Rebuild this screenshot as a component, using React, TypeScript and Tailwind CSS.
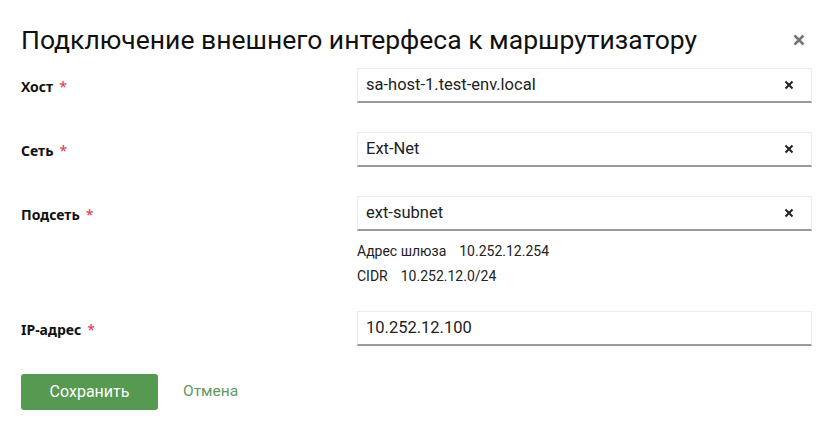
import React from 'react'

interface FieldProps {
  label: string
  value: string
  clearable?: boolean
  children?: React.ReactNode
}

function Field({ label, value, clearable = true, children }: FieldProps) {
  return (
    <div className="flex">
      <div className="w-[336px] shrink-0 pt-[8px] text-[14px] font-bold text-[#111] [font-family:'Noto_Sans',sans-serif]">
        {label}
        <span className="ml-[6px] font-normal text-[#e0304e]">*</span>
      </div>
      <div className="w-[455px]">
        <div className="flex h-[35px] items-center border border-b-2 border-[#ececec] border-b-[#9a9a9a] bg-white pl-[8px] pr-[17px]">
          <span className="flex-1 text-[16.5px] text-[#222] [font-family:'Roboto',sans-serif]">{value}</span>
          {clearable && (
            <svg width="10" height="10" viewBox="0 0 10 10" className="text-[#222]">
              <path d="M1.5 1.5 L8.5 8.5 M8.5 1.5 L1.5 8.5" stroke="currentColor" strokeWidth="2" />
            </svg>
          )}
        </div>
        {children}
      </div>
    </div>
  )
}

export default function App() {
  return (
    <div className="h-[431px] w-[834px] bg-white px-[21px] pt-[20px] [font-family:'Roboto',sans-serif]">
      <div className="flex h-[40px] items-center justify-between pr-[8px]">
        <h1 className="text-[26.5px] leading-[40px] font-normal text-[#111] [font-family:'Roboto',sans-serif]">
          Подключение внешнего интерфеса к маршрутизатору
        </h1>
        <svg width="12" height="12" viewBox="0 0 12 12" className="text-[#777]">
          <path d="M1.5 1.5 L10.5 10.5 M10.5 1.5 L1.5 10.5" stroke="currentColor" strokeWidth="2.6" />
        </svg>
      </div>

      <div className="mt-[8px] flex flex-col gap-[29px]">
        <Field label="Хост" value="sa-host-1.test-env.local" />
        <Field label="Сеть" value="Ext-Net" />
        <Field label="Подсеть" value="ext-subnet">
          <div className="mt-[10px] -mb-[4px] flex flex-col gap-[5px] text-[14px] leading-[20px] text-[#222] [font-family:'Roboto',sans-serif]">
            <div>
              Адрес шлюза<span className="ml-[13px]">10.252.12.254</span>
            </div>
            <div>
              CIDR<span className="ml-[13px]">10.252.12.0/24</span>
            </div>
          </div>
        </Field>
        <Field label="IP-адрес" value="10.252.12.100" clearable={false} />
      </div>

      <div className="mt-[28px] flex items-center gap-[25px]">
        <button className="h-[36px] w-[137px] rounded-[3px] bg-[#559a50] text-[16px] text-white">
          Сохранить
        </button>
        <button className="text-[15.5px] text-[#5f9a60]">Отмена</button>
      </div>
    </div>
  )
}
